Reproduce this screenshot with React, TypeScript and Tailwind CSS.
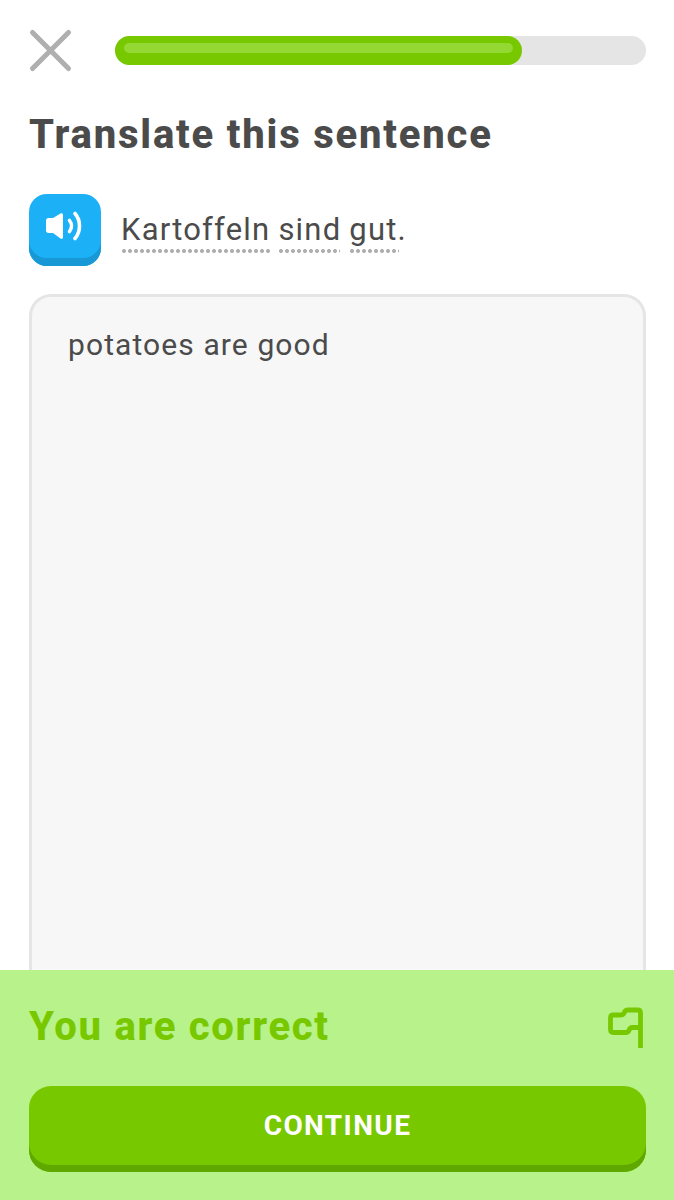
import React from 'react'

const font = { sans: "font-['Roboto','Liberation_Sans',sans-serif]" }

function SpeakerIcon() {
  return (
    <svg width="40" height="30" viewBox="0 0 40 30" fill="none">
      <path d="M1 9.500c0-1.400 1-2.500 2.400-2.500H8L15.500 2.500c1.100-.8 2.500 0 2.500 1.300v22.400c0 1.300-1.400 2.100-2.500 1.300L8 22H3.400C2 22 1 20.900 1 19.500z" fill="white" />
      <path d="M24.500 9.500c2.600 3.300 2.600 7.700 0 11" stroke="white" strokeWidth="3.600" strokeLinecap="round" />
      <path d="M30 2.500c6 7 6 18 0 25" stroke="white" strokeWidth="3.600" strokeLinecap="round" />
    </svg>
  )
}

function FlagIcon() {
  return (
    <svg width="36" height="41" viewBox="0 0 36 41" fill="none" className="mr-[3px] mt-[3px]">
      <path
        d="M33.500 41V6c0-2-1-3-3-3H21c-2 0-3 .8-3.600 2.400-.6 1.600-1.400 2.600-3.400 2.600H6.500c-2 0-3 1-3 3v11.500c0 2 1 3 3 3h12c2 0 3-.8 3.600-2.400.6-1.600 1.400-2.600 3.400-2.600h8.500"
        stroke="#78c800"
        strokeWidth="4.800"
        strokeLinejoin="round"
      />
    </svg>
  )
}

function Word({ text, dotted }: { text: string; dotted: number }) {
  return (
    <span className="relative inline-block">
      {text}
      <span
        className="absolute left-0 top-[38px] h-[4px] bg-[radial-gradient(circle,#b0b0b0_1.900px,transparent_2.200px)] bg-[length:6px_4px]"
        style={{ width: dotted }}
      />
    </span>
  )
}

export default function App() {
  return (
    <div className={`${font.sans} flex h-[1200px] w-[674px] flex-col overflow-hidden bg-white`}>
      <div className="flex h-[101px] shrink-0 items-start px-[28px] pt-[28px]">
        <svg width="46" height="46" viewBox="0 0 46 46" fill="none" className="shrink-0">
          <path d="M4.500 4.500l36 36M40.500 4.500l-36 36" stroke="#afafaf" strokeWidth="5" strokeLinecap="round" />
        </svg>
        <div className="ml-[41px] mt-[8px] h-[29px] w-[531px] rounded-full bg-[#e5e5e5]">
          <div className="h-[29px] w-[407px] rounded-full bg-[#78c800] pl-[9px] pr-[9px] pt-[7px]">
            <div className="h-[10px] rounded-full bg-[#93d833]" />
          </div>
        </div>
      </div>

      <h1 className="ml-[29px] mt-[10px] text-[40px] leading-[48px] font-extrabold tracking-[1.800px] text-[#4b4b4b]">
        Translate this sentence
      </h1>

      <div className="ml-[29px] mt-[35px] flex items-center">
        <div className="flex h-[72px] w-[72px] items-center justify-center rounded-[18px] bg-[#1cb0f6] pb-[8px] shadow-[inset_0_-8px_0_#1899d6]">
          <SpeakerIcon />
        </div>
        <div className="ml-[20px] flex gap-[8px] text-[31px] leading-[38px] tracking-[1.200px] text-[#4b4b4b]">
          <Word text="Kartoffeln" dotted={150} />
          <Word text="sind" dotted={62} />
          <Word text="gut." dotted={50} />
        </div>
      </div>

      <div className="ml-[29px] mr-[28px] mt-[28px] flex-1 rounded-t-[22px] border-[3px] border-b-0 border-[#e5e5e5] bg-[#f7f7f7] px-[36px] pt-[29px] text-[30px] leading-[38px] tracking-[1.100px] text-[#4b4b4b]">
        potatoes are good
      </div>

      <div className="h-[230px] shrink-0 bg-[#b8f28b] pl-[29px] pr-[28px] pt-[34px]">
        <div className="flex h-[44px] items-start justify-between">
          <div className="text-[40px] leading-[46px] font-extrabold tracking-[1.700px] text-[#78c800]">You are correct</div>
          <FlagIcon />
        </div>
        <div className="mt-[38px] flex h-[86px] items-center justify-center rounded-[22px] bg-[#78c800] pb-[7px] text-[28px] font-bold tracking-[1.400px] text-white shadow-[inset_0_-7px_0_#5fa800]">
          CONTINUE
        </div>
      </div>
    </div>
  )
}
